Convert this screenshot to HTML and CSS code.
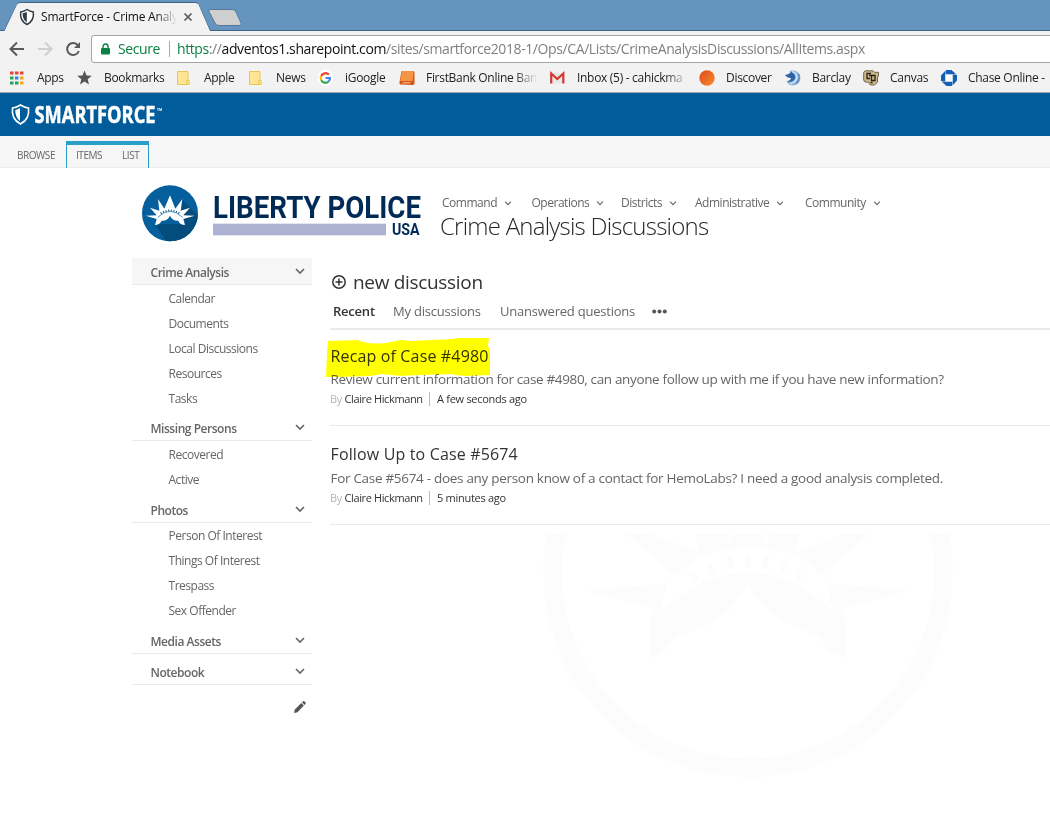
FILE: index.html
```html
<!DOCTYPE html>
<html lang="en">
<head>
<meta charset="utf-8">
<title>SmartForce - Crime Analysis Discussions</title>
<link rel="stylesheet" href="styles.css">
</head>
<body>
<svg class="defs" width="0" height="0">
  <symbol id="chev" viewBox="0 0 10 7"><path d="M1 1l4 4 4-4" fill="none" stroke="currentColor" stroke-width="1.6"/></symbol>
</svg>

<header class="chrome">
  <svg class="tabstrip" width="1050" height="31" viewBox="0 0 1050 31">
    <path d="M0 30.5H4.5L17 4.5Q18 2.500 20.500 2.500H195Q197.500 2.500 198.500 4.500L210 30.500H1050" fill="none" stroke="#3f6387"/>
    <path d="M4.500 31L17 4.500Q18 3 20.500 3H195Q197.500 3 198.500 4.500L210 31Z" fill="#f2f2f2"/>
    <path d="M210.500 9.500H232Q235 9.500 236 12L241 23Q242 25.500 239 25.500H219Q216 25.500 215 23L209 11.500Q208.500 9.500 210.500 9.500Z" fill="#cfcfcf" stroke="#55789c"/>
    <path d="M27 9.500Q30 11.500 33.300 12Q34.500 20.500 27 24.500Q19.500 20.500 20.700 12Q24 11.500 27 9.500Z" fill="#fff" stroke="#2f3b45" stroke-width="1.500"/>
    <path d="M26.800 11.800V22.300Q22.500 19.500 22.600 13.300Q25 13 26.800 11.800Z" fill="#2f3b45"/>
    <path d="M184.500 13.500L191.500 20.500M191.500 13.500L184.500 20.500" stroke="#5a5a5a" stroke-width="1.700"/>
  </svg>
  <span class="tab-title">SmartForce - Crime Analy</span>
  <div class="toolbar">
    <svg width="92" height="35" viewBox="0 31 92 35" fill="none" stroke-width="2">
      <path d="M24 49H11.500M17 42.500L10.500 49L17 55.500" stroke="#5a5a5a"/>
      <path d="M38 49H50.500M45 42.500L51.500 49L45 55.500" stroke="#cfcfcf"/>
      <path d="M78 45.500A6 6 0 1 0 78.800 51" stroke="#5a5a5a"/>
      <path d="M80 42V48H74Z" fill="#5a5a5a"/>
    </svg>
    <div class="omnibox">
      <svg width="9" height="12" viewBox="0 0 9 12"><rect y="5" width="9" height="6.500" rx="1" fill="#0b8043"/><path d="M2 5.500V3.500a2.500 2.500 0 0 1 5 0V5.500" fill="none" stroke="#0b8043" stroke-width="1.400"/></svg>
      <span class="secure">Secure</span>
      <span class="url"><span class="scheme">https</span>://<span class="host">adventos1.sharepoint.com</span>/sites/smartforce2018-1/Ops/CA/Lists/CrimeAnalysisDiscussions/AllItems.aspx</span>
    </div>
  </div>
  <nav class="bookmarks">
    <a><svg viewBox="0 0 16 16"><path d="M0 1.500h3.500v3H0zM5 1.500h3.500v3H5zM10 1.500h3.500v3H10z" fill="#ea4335"/><path d="M0 6.500h3.500v3H0zM0 11.500h3.500v3H0zM5 11.500h3.500v3H5z" fill="#23a45b"/><path d="M5 6.500h3.500v3H5z" fill="#3b7ded"/><path d="M10 6.500h3.500v3H10zM10 11.500h3.500v3H10z" fill="#f8a51b"/></svg><span>Apps</span></a>
    <a><svg viewBox="0 0 16 16"><path d="M7.500 0.500l2 5 5.200.3-4 3.500 1.300 5.200-4.500-2.900L3 14.500l1.300-5.200-4-3.500 5.200-.3z" fill="#555"/></svg><span>Bookmarks</span></a>
    <a><svg viewBox="0 0 16 16"><path d="M.5 1.500h10.500v9.500l1 3.500H.5z" fill="#ffe494" stroke="#e9c65c"/><path d="M9.500 14.500v-4h2.500v4z" fill="#ffe494" stroke="#e9c65c"/></svg><span>Apple</span></a>
    <a><svg viewBox="0 0 16 16"><path d="M.5 1.500h10.500v9.500l1 3.500H.5z" fill="#ffe494" stroke="#e9c65c"/><path d="M9.500 14.500v-4h2.500v4z" fill="#ffe494" stroke="#e9c65c"/></svg><span>News</span></a>
    <a><svg viewBox="0 0 16 16"><circle cx="7.500" cy="8" r="8" fill="#fff"/><g fill="none" stroke-width="2.200"><path d="M10.800 4.600A4.700 4.700 0 0 0 3.200 6" stroke="#ea4335"/><path d="M3.200 6A4.700 4.700 0 0 0 3.200 10.200" stroke="#fbbc05"/><path d="M3.200 10.200A4.700 4.700 0 0 0 10.600 11.500" stroke="#34a853"/><path d="M10.600 11.500A4.700 4.700 0 0 0 12 8H7.500" stroke="#4285f4"/></g></svg><span>iGoogle</span></a>
    <a><svg viewBox="0 0 16 16"><path d="M2.500 1h11.500q1.500 0 1.500 1.500v11q-.5 1.800-2.500 1.600L1.500 14.500Q0 14 .5 12z" fill="#d45714"/><path d="M3 1h10.500q1 0 1 1L13.500 11H1.200z" fill="#f59545"/><path d="M3.500 12.800h8" stroke="#f9c9a5"/></svg><span class="fade">FirstBank Online Ban</span></a>
    <a><svg viewBox="0 0 16 16"><path d="M1 3h12.500v10.500H1z" fill="#e9e9e9"/><path d="M1.200 13.500V3.500L7.300 9l6-5.500v10" fill="none" stroke="#d5392d" stroke-width="2.200"/></svg><span class="fade">Inbox (5) - cahickma</span></a>
    <a><svg viewBox="0 0 16 16"><defs><linearGradient id="or" x1="0" y1="0" x2="1" y2="1"><stop stop-color="#d94a1b"/><stop offset="1" stop-color="#f98c2d"/></linearGradient></defs><circle cx="8" cy="8" r="7.700" fill="url(#or)"/></svg><span>Discover</span></a>
    <a><svg viewBox="0 0 16 16"><path d="M4 1Q12-1 15 5Q17 13 9 15.500Q3 16 1.500 10.500Q6 12 8 9Q9 4 4 1Z" fill="#8fb6dc"/><path d="M0 5Q5 4 6 1.500Q12 5 9.500 9.500Q7 13 2 11.500Q6 10 6 8Q2 8 0 5Z" fill="#2c62a8"/><path d="M7 1.500Q13 4 11.500 9Q9.500 13 5 13.500" fill="none" stroke="#e3eef8" stroke-width="1.200"/><path d="M13.500 4Q16 9 11 14" fill="none" stroke="#5c8cc4" stroke-width="1.300"/></svg><span>Barclay</span></a>
    <a><svg viewBox="0 0 16 16"><path d="M2 .8h8l1.500 1.500h4V6l-1 1v5l-3 3H7.500L5 12H2L.7 10V2.500z" fill="#cdb987" stroke="#6b634e" stroke-width="1"/><path d="M8 3.500H4v5h3M6 5.500h6v5H8.500V6M12 5v2M7.500 12.500h2" fill="none" stroke="#26231d" stroke-width="1.300"/></svg><span>Canvas</span></a>
    <a><svg viewBox="0 0 16 16" fill="#1360b4"><path d="M5 0h5.500l5 4.500H5zM16 5v5.500L11.500 15.500V5zM11 16H5.500L.5 11.500H11zM0 11V5.500L4.500.5V11z"/><path d="M4.500 4.500h7v7h-7z" fill="#fff"/></svg><span>Chase Online -</span></a>
  </nav>
</header>

<div class="suitebar">
  <svg width="180" height="43" viewBox="0 0 180 43">
    <path d="M20.500 12Q24.500 14.500 28.500 15Q30 26 20.500 31Q11 26 12.500 15Q16.500 14.500 20.500 12Z" fill="none" stroke="#fff" stroke-width="1.600"/>
    <path d="M20 15V28Q15 24 15.300 17Q18 16.500 20 15Z" fill="#fff"/>
    <text class="brand" x="34.500" y="30.300" textLength="121" lengthAdjust="spacingAndGlyphs">SMARTFORCE</text>
    <text class="brand tm" x="157" y="18" textLength="5" lengthAdjust="spacingAndGlyphs">TM</text>
  </svg>
</div>
<div class="ribbon">
  <span class="browse">BROWSE</span>
  <div class="ctx"><span>ITEMS</span><span>LIST</span></div>
</div>

<div class="masthead">
  <svg class="logo" width="300" height="75" viewBox="0 0 900 225">
    <defs><clipPath id="disc"><circle cx="120" cy="115" r="84"/></clipPath></defs>
    <circle cx="120" cy="115" r="84" fill="#045f9c"/>
    <path d="M152 70L230 148V230H130L75 148L165 148Z" fill="#034c7c" clip-path="url(#disc)"/>
    <path d="M47 122L80 121L60 98L88 107L84 72L103 101L120 61L136 101L157 72L152 107L180 98L160 121L194 122L160 132L165 150Q150 150 145 137Q127 138 120 122Q113 138 95 137Q88 150 75 150L80 132Z" fill="#fff"/>
    <path d="M83 127Q120 91 158 127" fill="none" stroke="#045f9c" stroke-width="2"/>
    <path d="M92 115Q120 98 149 115" fill="none" stroke="#045f9c" stroke-width="6" stroke-dasharray="3 5"/>
    <text class="agency" x="249" y="129" font-size="94" textLength="624" lengthAdjust="spacingAndGlyphs">LIBERTY POLICE</text>
    <rect x="249" y="146" width="519" height="35" fill="#adb2d2"/>
    <text class="agency" x="786" y="180" font-size="47" textLength="83" lengthAdjust="spacingAndGlyphs">USA</text>
  </svg>
  <div class="titles">
    <nav class="topnav">
      <a>Command<svg><use href="#chev"/></svg></a><a>Operations<svg><use href="#chev"/></svg></a><a>Districts<svg><use href="#chev"/></svg></a><a>Administrative<svg><use href="#chev"/></svg></a><a>Community<svg><use href="#chev"/></svg></a>
    </nav>
    <h1>Crime Analysis Discussions</h1>
  </div>
</div>

<div class="page">
  <aside class="side">
    <h2 class="current">Crime Analysis<svg><use href="#chev"/></svg></h2>
    <ul><li>Calendar</li><li>Documents</li><li>Local Discussions</li><li>Resources</li><li>Tasks</li></ul>
    <h2>Missing Persons<svg><use href="#chev"/></svg></h2>
    <ul><li>Recovered</li><li>Active</li></ul>
    <h2 class="tall">Photos<svg><use href="#chev"/></svg></h2>
    <ul class="photos"><li>Person Of Interest</li><li>Things Of Interest</li><li>Trespass</li><li>Sex Offender</li></ul>
    <h2>Media Assets<svg><use href="#chev"/></svg></h2>
    <h2 class="tall">Notebook<svg><use href="#chev"/></svg></h2>
    <svg class="pencil" viewBox="0 0 12 12"><path d="M0 12l.8-3.500L7.300 2l2.600 2.600L3.500 11.200zM8 1.300L9.200.2q.5-.4 1 0l1.400 1.400q.5.500 0 1L10.600 3.900z" fill="#555"/></svg>
  </aside>
  <main class="board">
    <svg class="watermark" width="440" height="270" viewBox="0 0 1320 810">
      <defs><clipPath id="wm"><rect y="42" width="1320" height="768"/></clipPath></defs>
      <g clip-path="url(#wm)" fill="#fcfcfc">
        <circle cx="654" cy="158" r="586" fill="none" stroke="#fcfcfc" stroke-width="56"/>
        <path d="M285 40L436 168L462 143L515 103L360 40ZM1020 40L872 165L845 135L797 101L945 40ZM492 40H592L600 68L608 40H697L708 80L720 40H812L790 103Q650 60 515 110Z"/>
        <path d="M165 211L415 189Q398 230 396 280Q500 160 652 156Q805 160 910 280Q905 230 888 189L1138 211L938 267Q948 300 948 405Q940 415 925 408Q885 390 868 348Q700 300 653 185Q605 310 436 348Q410 400 370 411H357Q353 310 372 267Z"/>
        <path d="M645 103h16v40h-16zM586 112l16-6 10 38-14 6zM720 106l-14-2-12 40 14 6zM530 135l14-6 12 28-12 6zM774 133l-14-5-10 26 12 6zM484 165l12-8 12 22-12 6zM818 163l-12-7-10 22 12 7z"/>
      </g>
    </svg>
    <div class="new"><svg width="14" height="14" viewBox="0 0 14 14" fill="none" stroke="#333" stroke-width="1.500"><circle cx="7" cy="7" r="6.200"/><path d="M7 3.500V10.500M3.500 7H10.500"/></svg>new discussion</div>
    <div class="views"><b>Recent</b><span class="mine">My discussions</span><span class="open">Unanswered questions</span><svg width="15" height="5" viewBox="0 0 15 5" fill="#555"><circle cx="2.200" cy="2.500" r="2"/><circle cx="7.500" cy="2.500" r="2"/><circle cx="12.800" cy="2.500" r="2"/></svg></div>
    <article class="first">
      <svg class="marker" width="164" height="40" viewBox="0 0 164 40"><path d="M2 3L32 2L37 4Q51 7 65 4L75 2L84 3L105 2L128 1L130 0H163L162 8L164 12V37L140 38L128 37V36L94 37L74 38L56 36L45 38L12 39H0L1 16Z" fill="#ff0"/></svg>
      <h3>Recap of Case #4980</h3>
      <p class="p1">Review current information for case #4980, can anyone follow up with me if you have new information?</p>
      <div class="meta"><span class="by">By</span><span class="who">Claire Hickmann</span><span class="when">A few seconds ago</span></div>
    </article>
    <article>
      <h3>Follow Up to Case #5674</h3>
      <p class="p2">For Case #5674 - does any person know of a contact for HemoLabs? I need a good analysis completed.</p>
      <div class="meta"><span class="by">By</span><span class="who">Claire Hickmann</span><span class="when">5 minutes ago</span></div>
    </article>
  </main>
</div>
</body>
</html>
```
FILE: styles.css
```css
* { box-sizing: border-box; }
body { margin: 0; width: 1050px; height: 816px; overflow: hidden; background: #fff; font-family: "Open Sans", sans-serif; color: #666; }
h1, h2, h3, p, ul { margin: 0; padding: 0; font-weight: 400; }
span, a, b, h1, h3, p { white-space: nowrap; }
svg { display: block; flex: none; }
.defs { position: absolute; }

.chrome { position: relative; height: 93px; background: #f2f2f2; border-bottom: 1px solid #a9a9a9; }
.tabstrip { background: #6595be; }
.tab-title { position: absolute; left: 41px; top: 8px; width: 135px; overflow: hidden; font-size: 12px; line-height: 18px; color: #111; letter-spacing: -0.2px; -webkit-mask-image: linear-gradient(90deg, #000 115px, transparent 136px); }
.toolbar { display: flex; height: 35px; }
.omnibox { display: flex; align-items: center; flex: 1; height: 28px; margin: 4px -4px 0 -1px; padding-left: 9px; background: #fff; border: 1px solid #a5a5a5; border-radius: 3px; font-size: 14px; line-height: 18px; }
.secure { margin-left: 8px; width: 52px; border-right: 1px solid #aaa; color: #0b8043; letter-spacing: -0.4px; line-height: 16px; }
.url { margin-left: 7px; color: #808080; letter-spacing: -0.4px; }
.scheme { color: #0b8043; }
.host { color: #111; }
.bookmarks { display: grid; grid-template-columns: 67px 100px 72px 69px 81px 151px 149px 86px 78px 78px 109px; height: 26px; padding-left: 10px; }
.bookmarks a { display: flex; align-items: center; gap: 11px; height: 24px; font-size: 12px; color: #222; letter-spacing: -0.3px; }
.bookmarks span { margin-top: -1px; }
.bookmarks svg { width: 16px; height: 16px; }
.fade { width: 110px; overflow: hidden; -webkit-mask-image: linear-gradient(90deg, #000 88px, transparent 112px); }

.suitebar { height: 43px; background: #005c9a; }
.brand { font: 700 23px "Open Sans", sans-serif; fill: #fff; stroke: #fff; stroke-width: .5px; }
.tm { font-size: 4px; stroke: none; }
.ribbon { display: flex; height: 32px; background: #f6f6f6; border-bottom: 1px solid #ececec; font-size: 10px; color: #666; }
.browse { margin: 12px 0 0 17px; width: 49px; line-height: 14px; letter-spacing: -0.45px; }
.ctx { display: flex; gap: 20px; width: 83px; height: 27px; margin-top: 5px; padding: 3px 0 0 9px; line-height: 14px; border: 1px solid #2a9fca; border-top-width: 4px; border-bottom: 0; letter-spacing: -0.45px; }

.masthead { display: flex; height: 90px; padding: 7px 0 0 130px; }
.agency { font-family: Roboto, sans-serif; font-weight: 700; fill: #012a57; }
.titles { padding: 19px 0 0 10px; }
.topnav { display: grid; grid-template-columns: 89.5px 89.5px 74px 110px 80px; padding-left: 2px; font-size: 12px; line-height: 18px; letter-spacing: -0.48px; }
.topnav a { display: flex; align-items: center; gap: 7px; }
.topnav svg { width: 8px; height: 5px; }
h1 { margin-top: -1px; font-size: 24px; line-height: 30px; font-weight: 300; color: #262626; letter-spacing: -0.77px; }

.page { display: flex; }
.side { width: 180px; margin-left: 132px; }
.side h2 { display: flex; align-items: flex-end; justify-content: space-between; height: 30px; padding: 0 7px 2px 18.500px; border-bottom: 1px solid #e9e9e9; font-size: 12px; font-weight: 600; line-height: 18px; letter-spacing: -0.46px; }
.side h2.tall { height: 31px; }
.side h2.current { height: 27px; background: #f6f6f6; }
.side h2 svg { width: 10px; height: 7px; margin-bottom: 7px; }
.side ul { padding: 1px 0 0 36.500px; list-style: none; }
.side ul.photos { padding-top: 0; padding-bottom: 1px; }
.side li { height: 25px; font-size: 12px; line-height: 25px; letter-spacing: -0.48px; }
.pencil { width: 12px; height: 12px; margin: 16px 0 0 162px; }

.board { position: relative; flex: 1; padding-left: 18px; }
.watermark { position: absolute; left: 218px; top: 262px; z-index: -1; }
.new { display: flex; align-items: center; gap: 7px; height: 28px; margin-top: 10px; padding-left: 2px; font-size: 19px; color: #333; letter-spacing: -0.32px; }
.views { display: flex; align-items: center; height: 34px; padding: 0 0 3px 3px; font-size: 13px; letter-spacing: -0.22px; border-bottom: 2px solid #ebebeb; }
.views b { width: 60px; font-weight: 600; color: #333; }
.mine { width: 107px; }
.open { width: 152px; }
.views svg { margin-top: 2px; }
article { height: 99px; padding-top: 16px; border-bottom: 1px solid #ebebeb; }
.first { position: relative; height: 96px; padding-top: 14px; }
.marker { position: absolute; left: -4px; top: 8px; mix-blend-mode: multiply; }
h3 { padding-left: .5px; font-size: 16px; line-height: 24px; color: #333; letter-spacing: .15px; }
article p { padding-left: .5px; font-size: 13.500px; line-height: 22px; }
.p1 { letter-spacing: -0.355px; }
.p2 { padding-top: 1px; letter-spacing: -0.3px; }
.meta { display: flex; font-size: 11px; line-height: 14px; margin-top: 2px; color: #333; letter-spacing: -0.38px; }
.by { width: 14.500px; color: #b5b5b5; }
.who { width: 85.500px; border-right: 1px solid #bbb; }
.when { margin-left: 7px; letter-spacing: -0.28px; }
```
